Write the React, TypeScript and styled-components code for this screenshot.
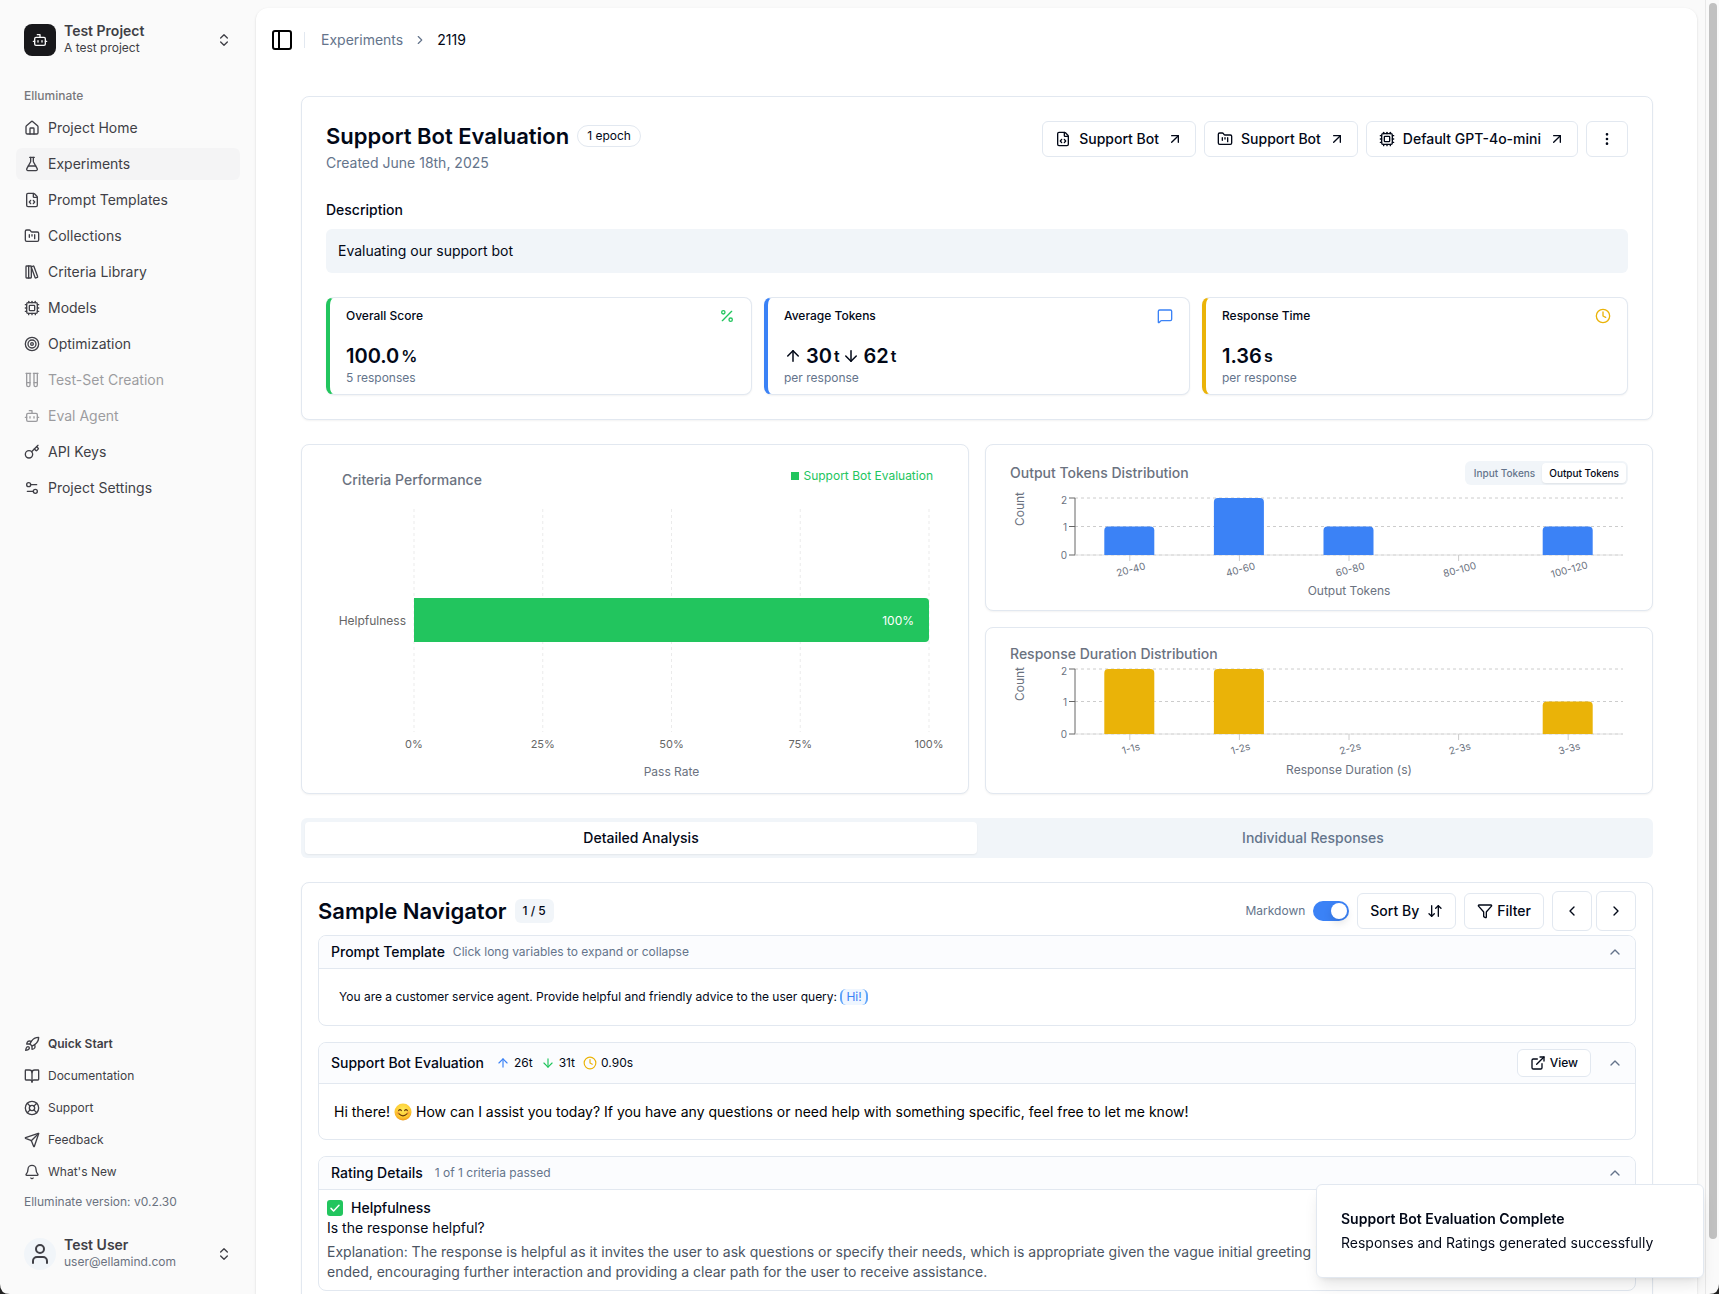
import React, { useState } from 'react';
import styled, { createGlobalStyle, css } from 'styled-components';
import {
  ArrowDown, ArrowDownUp, ArrowUp, ArrowUpRight, Bell, BookOpen, Bot, ChevronLeft, ChevronRight, ChevronUp,
  ChevronsUpDown, Clock, Cpu, EllipsisVertical, ExternalLink, FileCode, FlaskConical, FolderKanban, Funnel, House,
  Key, LibraryBig, LifeBuoy, MessageSquare, PanelLeft, Percent, Rocket, Send, Settings2, Target, TestTubes, User,
} from 'lucide-react';

const color = {
  ink: '#020817',
  muted: '#64748b',
  gray: '#6b7280',
  line: '#e2e8f0',
  soft: '#f1f5f9',
  side: '#3f3f46',
  green: '#22c55e',
  blue: '#3b82f6',
  amber: '#eab308',
};

const Global = createGlobalStyle`
  *, *::before, *::after { box-sizing: border-box; }
  html, body, #root { height: 100%; }
  body {
    margin: 0;
    overflow: hidden;
    background: #fafafa;
    color: ${color.ink};
    font-family: Inter, "Liberation Sans", sans-serif;
    font-size: 14px;
    line-height: 20px;
    -webkit-font-smoothing: antialiased;
  }
  h1, h2, h3, p, ul { margin: 0; padding: 0; font-weight: inherit; font-size: inherit; }
  ul { list-style: none; }
  button { font: inherit; color: inherit; cursor: pointer; padding: 0; border: 0; background: none; }
  a { color: inherit; text-decoration: none; }
  svg { flex-shrink: 0; }
`;

/* ---------- shell ---------- */

const Shell = styled.div`
  display: flex;
  height: 100%;
  padding-right: 14px;
`;

const Track = styled.div`
  position: fixed;
  inset: 0 0 0 auto;
  width: 14px;
  padding: 3px 2px 55px 3px;
  border-left: 1px solid #e8e8e8;
  background: #fafafa;
`;

const Thumb = styled.div`
  height: 100%;
  border-radius: 4px;
  background: #c1c1c1;
`;

/* ---------- sidebar ---------- */

const Sidebar = styled.aside`
  display: flex;
  flex-direction: column;
  flex: 0 0 256px;
  padding: 16px;
  color: ${color.side};
`;

const Account = styled.button`
  display: flex;
  align-items: center;
  gap: 8px;
  height: 48px;
  padding: 0 8px;
  text-align: left;
`;

const Logo = styled.span<{ $round?: boolean }>`
  display: grid;
  place-items: center;
  width: 32px;
  height: 32px;
  border-radius: 8px;
  background: #18181b;
  color: #fafafa;
  ${p => p.$round && css`
    border-radius: 50%;
    background: ${color.soft};
    color: ${color.side};
  `}
`;

const AccountText = styled.span`
  display: flex;
  flex-direction: column;
  flex: 1;
`;

const AccountName = styled.span`
  font-weight: 600;
  line-height: 16px;
`;

const AccountSub = styled.span<{ $muted?: boolean }>`
  font-size: 12px;
  line-height: 18px;
  color: ${p => (p.$muted ? color.gray : 'inherit')};
`;

const GroupLabel = styled.h2`
  padding: 0 8px;
  margin-top: 16px;
  font-size: 12px;
  font-weight: 500;
  line-height: 32px;
  opacity: 0.7;
`;

const NavList = styled.ul<{ $bottom?: boolean }>`
  display: flex;
  flex-direction: column;
  gap: 4px;
  margin-top: ${p => (p.$bottom ? 'auto' : '0')};
`;

const NavLink = styled.a<{ $active?: boolean; $off?: boolean; $small?: boolean; $bold?: boolean }>`
  display: flex;
  align-items: center;
  gap: 8px;
  height: ${p => (p.$small ? 28 : 32)}px;
  padding: 0 8px;
  border-radius: 6px;
  font-size: ${p => (p.$small ? 12 : 14)}px;
  font-weight: ${p => (p.$bold ? 600 : 400)};
  background: ${p => (p.$active ? '#f4f4f5' : 'transparent')};
  opacity: ${p => (p.$off ? 0.5 : 1)};
`;

const Version = styled.p`
  padding: 0 8px;
  margin: 8px 0 20px;
  font-size: 12px;
  line-height: 16px;
  color: ${color.gray};
`;

/* ---------- main ---------- */

const Main = styled.main`
  flex: 1;
  min-width: 0;
  margin: 8px 8px 0 0;
  border-radius: 12px 12px 0 0;
  background: #fff;
  box-shadow: 0 1px 3px rgba(0, 0, 0, 0.1), 0 1px 2px rgba(0, 0, 0, 0.06);
  overflow: hidden;
`;

const TopBar = styled.header`
  display: flex;
  align-items: center;
  height: 64px;
  padding: 0 14px;
`;

const IconButton = styled.button`
  display: grid;
  place-items: center;
`;

const Divider = styled.span`
  width: 1px;
  height: 16px;
  margin: 0 16px 0 10px;
  background: ${color.line};
`;

const Crumbs = styled.nav`
  display: flex;
  align-items: center;
  gap: 10px;
  line-height: 24px;
  color: ${color.muted};
`;

const Current = styled.span`
  color: ${color.ink};
`;

const Content = styled.div`
  display: flex;
  flex-direction: column;
  gap: 24px;
  padding: 24px 44px 24px 45px;
`;

const Card = styled.section`
  border: 1px solid ${color.line};
  border-radius: 8px;
  background: #fff;
  box-shadow: 0 1px 2px rgba(0, 0, 0, 0.05);
`;

const Summary = styled(Card)`
  padding: 24px;
`;

const SummaryHead = styled.div`
  display: flex;
  justify-content: space-between;
  align-items: flex-start;
`;

const Row = styled.div<{ $gap?: number }>`
  display: flex;
  align-items: center;
  gap: ${p => p.$gap ?? 8}px;
`;

const Title = styled.h1`
  font-size: 22px;
  font-weight: 600;
  line-height: 30px;
`;

const Created = styled.p`
  color: ${color.muted};
  line-height: 24px;
`;

const Pill = styled.span`
  padding: 2px 9px;
  border: 1px solid ${color.line};
  border-radius: 12px;
  font-size: 12px;
  line-height: 16px;
`;

const Button = styled.button<{ $size?: 'small' | 'square' | 'more'; $tight?: boolean }>`
  display: inline-flex;
  align-items: center;
  justify-content: center;
  gap: ${p => (p.$tight ? 4 : 8)}px;
  height: 36px;
  padding: 0 12px;
  border: 1px solid ${color.line};
  border-radius: 6px;
  background: #fff;
  font-weight: 500;
  ${p => p.$size === 'small' && css`
    height: 28px;
    font-size: 12px;
  `}
  ${p => p.$size === 'square' && css`
    width: 40px;
    height: 40px;
    padding: 0;
  `}
  ${p => p.$size === 'more' && css`
    width: 42px;
    padding: 0;
  `}
`;

const LinkButton = styled(Button).attrs({ as: 'a', href: '#' })``;

const FieldLabel = styled.h2`
  margin-top: 24px;
  font-weight: 500;
  line-height: 22px;
`;

const DescriptionBox = styled.p`
  margin: 8px 0 24px;
  padding: 12px;
  border-radius: 6px;
  background: ${color.soft};
`;

const Stats = styled.div`
  display: grid;
  grid-template-columns: repeat(3, 1fr);
  gap: 12px;
`;

const StatCard = styled(Card)<{ $tone: string }>`
  padding: 8px 16px;
  border-left: 4px solid ${p => p.$tone};
`;

const StatHead = styled.div<{ $tone: string }>`
  display: flex;
  align-items: center;
  justify-content: space-between;
  margin-bottom: 16px;
  svg { color: ${p => p.$tone}; }
`;

const StatName = styled.h3`
  font-size: 12px;
  font-weight: 500;
`;

const StatValue = styled.p`
  display: flex;
  align-items: center;
  gap: 2px;
  font-size: 20px;
  font-weight: 600;
  line-height: 28px;
  svg { margin: 0 2px 0 0; }
`;

const Unit = styled.span`
  font-size: 16px;
`;

const Small = styled.span`
  display: block;
  font-size: 12px;
  line-height: 16px;
  color: ${color.muted};
`;

/* ---------- charts ---------- */

const Charts = styled.div`
  display: grid;
  grid-template-columns: 1fr 1fr;
  gap: 16px;
`;

const ChartColumn = styled.div`
  display: flex;
  flex-direction: column;
  gap: 16px;
`;

const ChartCard = styled(Card)`
  overflow: hidden;
`;

const ChartHead = styled.div<{ $variant?: 'inset' | 'plain' }>`
  display: flex;
  align-items: center;
  justify-content: space-between;
  height: 32px;
  margin-top: 12px;
  padding: 0 24px;
  ${p => p.$variant === 'inset' && css`
    height: 46px;
    margin-top: 0;
    padding: 24px 35px 0 40px;
  `}
  ${p => p.$variant === 'plain' && css`
    height: 20px;
    margin-top: 16px;
  `}
`;

const ChartTitle = styled.h3`
  font-weight: 500;
  color: ${color.gray};
`;

const Legend = styled.span`
  display: flex;
  align-items: center;
  gap: 4px;
  margin-bottom: 8px;
  font-size: 12px;
  line-height: 16px;
  color: ${color.green};
  &::before {
    content: '';
    width: 8px;
    height: 8px;
    background: currentColor;
  }
`;

const Plot = styled.svg`
  display: block;
  width: 100%;
  height: auto;
  font-size: 12px;
  fill: ${color.gray};
  .tick { font-size: 11px; fill: #666; }
  .small { font-size: 10px; }
`;

const Segmented = styled.div`
  display: flex;
  padding: 2px;
  border-radius: 6px;
  background: ${color.soft};
`;

const Segment = styled.button<{ $on?: boolean }>`
  padding: 0 7px;
  border-radius: 4px;
  font-size: 10px;
  font-weight: 500;
  line-height: 20px;
  color: ${p => (p.$on ? color.ink : color.muted)};
  background: ${p => (p.$on ? '#fff' : 'transparent')};
  box-shadow: ${p => (p.$on ? '0 1px 2px rgba(0, 0, 0, 0.08)' : 'none')};
`;

/* ---------- tabs ---------- */

const Tabs = styled.div`
  display: grid;
  grid-template-columns: 1fr 1fr;
  padding: 4px;
  border-radius: 6px;
  background: ${color.soft};
`;

const Tab = styled.button<{ $on?: boolean }>`
  height: 32px;
  border-radius: 4px;
  font-weight: 500;
  color: ${p => (p.$on ? color.ink : color.muted)};
  background: ${p => (p.$on ? '#fff' : 'transparent')};
  box-shadow: ${p => (p.$on ? '0 1px 2px rgba(0, 0, 0, 0.06)' : 'none')};
`;

/* ---------- sample navigator ---------- */

const Navigator = styled(Card)`
  display: flex;
  flex-direction: column;
  gap: 16px;
  padding: 8px 16px 40px;
`;

const NavigatorHead = styled.div`
  display: flex;
  align-items: center;
  justify-content: space-between;
  margin-bottom: -12px;
`;

const Counter = styled.span`
  padding: 4px 8px;
  border-radius: 6px;
  background: ${color.soft};
  font-size: 12px;
  font-weight: 500;
  line-height: 16px;
`;

const SwitchLabel = styled.label`
  display: flex;
  align-items: center;
  gap: 8px;
  font-size: 12px;
  color: ${color.muted};
`;

const Switch = styled.input`
  appearance: none;
  display: flex;
  align-items: center;
  width: 36px;
  height: 20px;
  margin: 0;
  padding: 2px;
  border-radius: 10px;
  background: ${color.line};
  cursor: pointer;
  &::before {
    content: '';
    width: 16px;
    height: 16px;
    border-radius: 50%;
    background: #fff;
    box-shadow: 0 4px 8px rgba(0, 0, 0, 0.12);
  }
  &:checked { background: ${color.blue}; justify-content: flex-end; }
`;

const Panel = styled.section`
  border: 1px solid ${color.line};
  border-radius: 8px;
  overflow: hidden;
`;

const PanelHead = styled.header<{ $tall?: boolean }>`
  display: flex;
  align-items: center;
  justify-content: space-between;
  height: ${p => (p.$tall ? 41 : 33)}px;
  padding: 0 12px;
  border-bottom: 1px solid ${color.line};
  background: #fbfcfe;
`;

const PanelTitle = styled.h3`
  font-weight: 500;
`;

const Metric = styled.span<{ $tone: string }>`
  display: flex;
  align-items: center;
  gap: 4px;
  font-size: 12px;
  svg { color: ${p => p.$tone}; }
`;

const Collapse = styled(IconButton)`
  color: ${color.muted};
`;

const PromptBody = styled.p`
  padding: 18px 20px;
  font-size: 12px;
`;

const Variable = styled.button`
  padding: 0 4px;
  border-left: 2px solid #60a5fa;
  border-right: 2px solid #60a5fa;
  border-radius: 6px;
  background: #eff6ff;
  color: ${color.blue};
  line-height: 16px;
`;

const Answer = styled.p`
  display: flex;
  align-items: center;
  gap: 4px;
  padding: 18px 15px 17px;
  color: #000;
`;

const RatingBody = styled.div`
  padding: 8px;
`;

const RatingName = styled.h3`
  display: flex;
  align-items: center;
  gap: 8px;
  font-weight: 500;
`;

const Explanation = styled.p`
  margin-top: 4px;
  color: #4b5563;
`;

/* ---------- toast ---------- */

const Toast = styled.div`
  position: fixed;
  right: 15px;
  bottom: 16px;
  width: 388px;
  padding: 24px;
  border: 1px solid ${color.line};
  border-radius: 6px;
  background: #fff;
  box-shadow: 0 10px 15px -3px rgba(0, 0, 0, 0.1), 0 4px 6px -4px rgba(0, 0, 0, 0.1);
`;

const ToastTitle = styled.p`
  margin-bottom: 4px;
  font-weight: 600;
`;

const Corner = styled.svg<{ $right?: boolean }>`
  position: fixed;
  bottom: 0;
  left: ${p => (p.$right ? 'auto' : '0')};
  right: ${p => (p.$right ? '0' : 'auto')};
`;

/* ---------- data ---------- */

const navItems = [
  { label: 'Project Home', icon: House },
  { label: 'Experiments', icon: FlaskConical, active: true },
  { label: 'Prompt Templates', icon: FileCode },
  { label: 'Collections', icon: FolderKanban },
  { label: 'Criteria Library', icon: LibraryBig },
  { label: 'Models', icon: Cpu },
  { label: 'Optimization', icon: Target },
  { label: 'Test-Set Creation', icon: TestTubes, off: true },
  { label: 'Eval Agent', icon: Bot, off: true },
  { label: 'API Keys', icon: Key },
  { label: 'Project Settings', icon: Settings2 },
];

const helpItems = [
  { label: 'Quick Start', icon: Rocket, bold: true },
  { label: 'Documentation', icon: BookOpen },
  { label: 'Support', icon: LifeBuoy },
  { label: 'Feedback', icon: Send },
  { label: "What's New", icon: Bell },
];

const tokenBins = [
  { label: '20-40', count: 1 },
  { label: '40-60', count: 2 },
  { label: '60-80', count: 1 },
  { label: '80-100', count: 0 },
  { label: '100-120', count: 1 },
];

const durationBins = [
  { label: '1-1s', count: 2 },
  { label: '1-2s', count: 2 },
  { label: '2-2s', count: 0 },
  { label: '2-3s', count: 0 },
  { label: '3-3s', count: 1 },
];

type HistogramProps = {
  bins: { label: string; count: number }[];
  fill: string;
  axis: string;
  top: number;
  step: number;
  height: number;
  countAt: number;
};

function Histogram({ bins, fill, axis, top, step, height, countAt }: HistogramProps) {
  const left = 89;
  const right = 637;
  const base = top + step * 2;
  const band = (right - left) / bins.length;
  const y = (n: number) => base - n * step;
  return (
    <Plot viewBox={`0 0 666 ${height}`} role="img" aria-label={`${axis} histogram`}>
      {[0, 1, 2].map(n => (
        <g key={n}>
          <line x1={left} x2={right} y1={y(n)} y2={y(n)} stroke="#ccc" strokeDasharray="3 3" />
          <line x1={left - 6} x2={left} y1={y(n)} y2={y(n)} stroke="#666" />
          <text className="small" x={left - 8} y={y(n) + (n === 2 ? 6 : 4)} textAnchor="end">{n}</text>
        </g>
      ))}
      <line x1={left} x2={left} y1={y(2)} y2={base} stroke="#666" />
      <line x1={left} x2={right} y1={base} y2={base} stroke="#e0e0e0" />
      {bins.map((bin, i) => {
        const cx = left + band * (i + 0.5);
        const h = bin.count * step;
        return (
          <g key={bin.label}>
            <line x1={cx} x2={cx} y1={base} y2={base + 6} stroke="#ccc" />
            {bin.count > 0 && (
              <path
                fill={fill}
                d={`M${cx - 25.5} ${base}v${4 - h}q0 -4 4 -4h42q4 0 4 4v${h - 4}z`}
              />
            )}
            <text className="small" textAnchor="middle" transform={`translate(${cx + 2} ${base + 18}) rotate(-15)`}>{bin.label}</text>
          </g>
        );
      })}
      <text textAnchor="middle" x={(left + right) / 2} y={base + 40}>{axis}</text>
      <text textAnchor="middle" transform={`translate(38 ${countAt}) rotate(-90)`}>Count</text>
    </Plot>
  );
}

function PassRateChart() {
  const left = 112;
  const right = 627;
  return (
    <Plot viewBox="0 0 666 302" role="img" aria-label="Helpfulness pass rate 100%">
      {[0, 25, 50, 75, 100].map(v => {
        const x = left + ((right - left) * v) / 100;
        return (
          <g key={v}>
            <line x1={x} x2={x} y1="18" y2="241" stroke="#ebebeb" strokeDasharray="3 3" />
            <text className="tick" textAnchor="middle" x={x} y="257">{v}%</text>
          </g>
        );
      })}
      <path fill={color.green} d={`M${left} 107h${right - left - 4}q4 0 4 4v36q0 4 -4 4h${4 + left - right}z`} />
      <text textAnchor="end" x={left - 8} y="134" fill="#666">Helpfulness</text>
      <text textAnchor="end" x={right - 15} y="134" fill="#fff">100%</text>
      <text textAnchor="middle" x={(left + right) / 2} y="285">Pass Rate</text>
    </Plot>
  );
}

const Smile = () => (
  <svg width="18" height="18" viewBox="0 0 18 18" role="img" aria-label="smiling face">
    <defs>
      <radialGradient id="face" cx="0.5" cy="0.35" r="0.65">
        <stop offset="0" stopColor="#ffe95a" />
        <stop offset="0.7" stopColor="#fdc930" />
        <stop offset="1" stopColor="#f09a1a" />
      </radialGradient>
    </defs>
    <circle cx="9" cy="9" r="8.5" fill="url(#face)" />
    <path d="M4.6 7.6q1.4-2 2.8 0M10.6 7.6q1.4-2 2.8 0" fill="none" stroke="#6b3a0a" strokeWidth="1.1" strokeLinecap="round" />
    <path d="M4.8 10.6q4.2 4.6 8.4 0" fill="none" stroke="#6b3a0a" strokeWidth="1.1" strokeLinecap="round" />
    <circle cx="3.8" cy="10" r="1.4" fill="#f47b3a" opacity="0.45" />
    <circle cx="14.2" cy="10" r="1.4" fill="#f47b3a" opacity="0.45" />
  </svg>
);

const Passed = () => (
  <svg width="16" height="16" viewBox="0 0 16 16" role="img" aria-label="Passed">
    <rect width="16" height="16" rx="3" fill={color.green} />
    <path d="M4 8.4l2.6 2.6L12 5.2" fill="none" stroke="#fff" strokeWidth="1.5" strokeLinecap="round" strokeLinejoin="round" />
  </svg>
);

export default function App() {
  const [markdown, setMarkdown] = useState(true);
  return (
    <>
      <Global />
      <Shell>
        <Sidebar>
          <Account>
            <Logo><Bot size={16} /></Logo>
            <AccountText>
              <AccountName>Test Project</AccountName>
              <AccountSub>A test project</AccountSub>
            </AccountText>
            <ChevronsUpDown size={16} />
          </Account>
          <GroupLabel>Elluminate</GroupLabel>
          <NavList>
            {navItems.map(({ label, icon: Icon, active, off }) => (
              <li key={label}><NavLink href="#" $active={active} $off={off}><Icon size={16} />{label}</NavLink></li>
            ))}
          </NavList>
          <NavList $bottom>
            {helpItems.map(({ label, icon: Icon, bold }) => (
              <li key={label}><NavLink href="#" $small $bold={bold}><Icon size={16} />{label}</NavLink></li>
            ))}
          </NavList>
          <Version>Elluminate version: v0.2.30</Version>
          <Account>
            <Logo $round><User size={24} /></Logo>
            <AccountText>
              <AccountName>Test User</AccountName>
              <AccountSub $muted>user@ellamind.com</AccountSub>
            </AccountText>
            <ChevronsUpDown size={16} />
          </Account>
        </Sidebar>

        <Main>
          <TopBar>
            <IconButton aria-label="Toggle sidebar"><PanelLeft size={24} color="#000" /></IconButton>
            <Divider />
            <Crumbs aria-label="Breadcrumb">
              <a href="#">Experiments</a>
              <ChevronRight size={14} />
              <Current>2119</Current>
            </Crumbs>
          </TopBar>

          <Content>
            <Summary>
              <SummaryHead>
                <div>
                  <Row>
                    <Title>Support Bot Evaluation</Title>
                    <Pill>1 epoch</Pill>
                  </Row>
                  <Created>Created June 18th, 2025</Created>
                </div>
                <Row>
                  <LinkButton><FileCode size={16} />Support Bot<ArrowUpRight size={16} /></LinkButton>
                  <LinkButton><FolderKanban size={16} />Support Bot<ArrowUpRight size={16} /></LinkButton>
                  <LinkButton><Cpu size={16} />Default GPT-4o-mini<ArrowUpRight size={16} /></LinkButton>
                  <Button $size="more" aria-label="More actions"><EllipsisVertical size={16} /></Button>
                </Row>
              </SummaryHead>
              <FieldLabel>Description</FieldLabel>
              <DescriptionBox>Evaluating our support bot</DescriptionBox>
              <Stats>
                <StatCard $tone={color.green}>
                  <StatHead $tone={color.green}><StatName>Overall Score</StatName><Percent size={16} /></StatHead>
                  <StatValue>100.0<Unit>%</Unit></StatValue>
                  <Small>5 responses</Small>
                </StatCard>
                <StatCard $tone={color.blue}>
                  <StatHead $tone={color.blue}><StatName>Average Tokens</StatName><MessageSquare size={16} /></StatHead>
                  <StatValue>
                    <ArrowUp size={18} />30<Unit>t</Unit>
                    <ArrowDown size={18} />62<Unit>t</Unit>
                  </StatValue>
                  <Small>per response</Small>
                </StatCard>
                <StatCard $tone={color.amber}>
                  <StatHead $tone={color.amber}><StatName>Response Time</StatName><Clock size={16} /></StatHead>
                  <StatValue>1.36<Unit>s</Unit></StatValue>
                  <Small>per response</Small>
                </StatCard>
              </Stats>
            </Summary>

            <Charts>
              <ChartCard>
                <ChartHead $variant="inset">
                  <ChartTitle>Criteria Performance</ChartTitle>
                  <Legend>Support Bot Evaluation</Legend>
                </ChartHead>
                <PassRateChart />
              </ChartCard>
              <ChartColumn>
                <ChartCard>
                  <ChartHead>
                    <ChartTitle>Output Tokens Distribution</ChartTitle>
                    <Segmented>
                      <Segment>Input Tokens</Segment>
                      <Segment $on>Output Tokens</Segment>
                    </Segmented>
                  </ChartHead>
                  <Histogram bins={tokenBins} fill={color.blue} axis="Output Tokens" top={9} step={28.5} height={121} countAt={20} />
                </ChartCard>
                <ChartCard>
                  <ChartHead $variant="plain"><ChartTitle>Response Duration Distribution</ChartTitle></ChartHead>
                  <Histogram bins={durationBins} fill={color.amber} axis="Response Duration (s)" top={5} step={32.5} height={129} countAt={20} />
                </ChartCard>
              </ChartColumn>
            </Charts>

            <Tabs role="tablist">
              <Tab role="tab" aria-selected $on>Detailed Analysis</Tab>
              <Tab role="tab" aria-selected={false}>Individual Responses</Tab>
            </Tabs>

            <Navigator>
              <NavigatorHead>
                <Row>
                  <Title as="h2">Sample Navigator</Title>
                  <Counter>1 / 5</Counter>
                </Row>
                <Row>
                  <SwitchLabel>
                    Markdown
                    <Switch type="checkbox" role="switch" checked={markdown} onChange={e => setMarkdown(e.target.checked)} />
                  </SwitchLabel>
                  <Button>Sort By<ArrowDownUp size={16} /></Button>
                  <Button $tight><Funnel size={16} />Filter</Button>
                  <Row $gap={4}>
                    <Button $size="square" aria-label="Previous sample"><ChevronLeft size={16} /></Button>
                    <Button $size="square" aria-label="Next sample"><ChevronRight size={16} /></Button>
                  </Row>
                </Row>
              </NavigatorHead>

              <Panel>
                <PanelHead>
                  <Row>
                    <PanelTitle>Prompt Template</PanelTitle>
                    <Small>Click long variables to expand or collapse</Small>
                  </Row>
                  <Collapse aria-label="Collapse prompt template"><ChevronUp size={16} /></Collapse>
                </PanelHead>
                <PromptBody>
                  You are a customer service agent. Provide helpful and friendly advice to the user query: <Variable>Hi!</Variable>
                </PromptBody>
              </Panel>

              <Panel>
                <PanelHead $tall>
                  <Row $gap={12}>
                    <PanelTitle>Support Bot Evaluation</PanelTitle>
                    <Row>
                      <Metric $tone={color.blue}><ArrowUp size={14} />26t</Metric>
                      <Metric $tone={color.green}><ArrowDown size={14} />31t</Metric>
                      <Metric $tone={color.amber}><Clock size={14} />0.90s</Metric>
                    </Row>
                  </Row>
                  <Row $gap={16}>
                    <Button $size="small" $tight><ExternalLink size={16} />View</Button>
                    <Collapse aria-label="Collapse response"><ChevronUp size={16} /></Collapse>
                  </Row>
                </PanelHead>
                <Answer>
                  <span>Hi there!</span>
                  <Smile />
                  <span>How can I assist you today? If you have any questions or need help with something specific, feel free to let me know!</span>
                </Answer>
              </Panel>

              <Panel>
                <PanelHead>
                  <Row $gap={12}>
                    <PanelTitle>Rating Details</PanelTitle>
                    <Small>1 of 1 criteria passed</Small>
                  </Row>
                  <Collapse aria-label="Collapse rating details"><ChevronUp size={16} /></Collapse>
                </PanelHead>
                <RatingBody>
                  <RatingName><Passed />Helpfulness</RatingName>
                  <p>Is the response helpful?</p>
                  <Explanation>
                    Explanation: The response is helpful as it invites the user to ask questions or specify their needs,
                    which is appropriate given the vague initial greeting 'Hi!'.
                    <br />
                    ended, encouraging further interaction and providing a clear path for the user to receive
                    assistance.
                  </Explanation>
                </RatingBody>
              </Panel>
            </Navigator>
          </Content>
        </Main>
      </Shell>

      <Track aria-hidden="true"><Thumb /></Track>
      <Toast role="status">
        <ToastTitle>Support Bot Evaluation Complete</ToastTitle>
        <p>Responses and Ratings generated successfully</p>
      </Toast>
      <Corner width="10" height="10" aria-hidden="true"><path d="M0 0q0 10 10 10H0z" fill="#222" /></Corner>
      <Corner $right width="10" height="10" aria-hidden="true"><path d="M10 0q0 10-10 10h10z" fill="#222" /></Corner>
    </>
  );
}
